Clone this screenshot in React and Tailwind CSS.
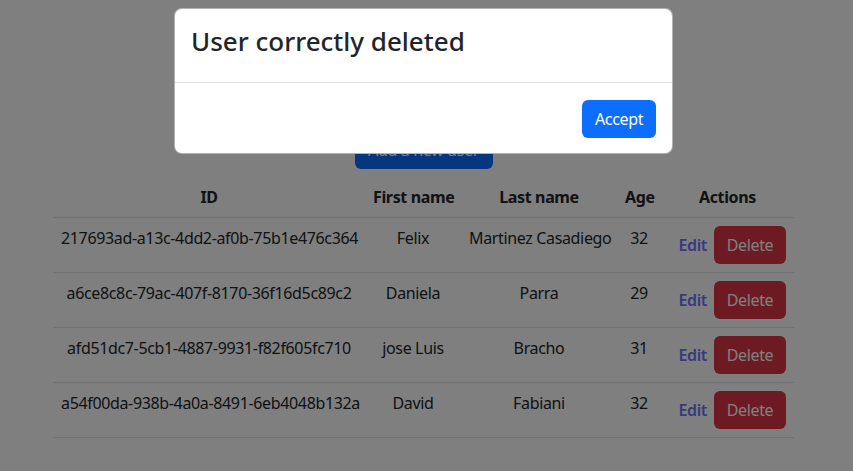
import React from "react";

const users = [
  { id: "217693ad-a13c-4dd2-af0b-75b1e476c364", firstName: "Felix", lastName: "Martinez Casadiego", age: 32 },
  { id: "a6ce8c8c-79ac-407f-8170-36f16d5c89c2", firstName: "Daniela", lastName: "Parra", age: 29 },
  { id: "afd51dc7-5cb1-4887-9931-f82f605fc710", firstName: "jose Luis", lastName: "Bracho", age: 31 },
  { id: "a54f00da-938b-4a0a-8491-6eb4048b132a", firstName: "David", lastName: "Fabiani", age: 32 },
];

function UserRow({ user }) {
  return (
    <tr className="border-b border-[#dee2e6]">
      <td className="p-2 align-top whitespace-nowrap">{user.id}</td>
      <td className="p-2 align-top whitespace-nowrap">{user.firstName}</td>
      <td className="p-2 align-top whitespace-nowrap">{user.lastName}</td>
      <td className="p-2 align-top whitespace-nowrap">{user.age}</td>
      <td className="p-2 align-top whitespace-nowrap">
        <div className="flex items-start justify-end gap-[7px]">
          <a href="#" className="pt-[7px] font-semibold text-[#7272ff]">Edit</a>
          <button className="h-[38px] w-[72px] rounded-md bg-[#dc3545] text-white">Delete</button>
        </div>
      </td>
    </tr>
  );
}

export default function App() {
  return (
    <div
      className="relative h-[471px] overflow-hidden bg-white text-base leading-6 tracking-[-0.35px] text-[#212529]"
      style={{ fontFamily: '"Noto Sans", "Open Sans", sans-serif' }}
    >
      <div className="ml-[53px] flex w-[741px] flex-col items-center pt-[131px]">
        <button className="h-[38px] w-[138px] rounded-md bg-[#0d6efd] text-white">Add a new user</button>
        <table className="mt-2 w-full table-fixed border-collapse text-center">
          <thead>
            <tr className="border-b border-[#dee2e6]">
              <th className="w-[312px] p-2 font-bold">ID</th>
              <th className="w-[96px] p-2 font-bold whitespace-nowrap">First name</th>
              <th className="w-[156px] p-2 font-bold whitespace-nowrap">Last name</th>
              <th className="w-[44px] p-2 font-bold">Age</th>
              <th className="w-[133px] p-2 font-bold">Actions</th>
            </tr>
          </thead>
          <tbody>
            {users.map((u) => (
              <UserRow key={u.id} user={u} />
            ))}
          </tbody>
        </table>
      </div>

      {/* modal backdrop + dialog */}
      <div className="absolute inset-0 bg-black/50" />
      <div className="absolute left-[174px] top-[8px] w-[499px] rounded-lg border border-black/30 bg-white">
        <div className="h-[74px] border-b border-[#dee2e6] px-4 pt-[17px]">
          <h4 className="text-[26px] leading-[31px] font-medium tracking-normal">User correctly deleted</h4>
        </div>
        <div className="flex justify-end px-4 pt-[17px] pb-[15px]">
          <button className="h-[38px] w-[74px] rounded-md bg-[#0d6efd] text-white">Accept</button>
        </div>
      </div>
    </div>
  );
}
